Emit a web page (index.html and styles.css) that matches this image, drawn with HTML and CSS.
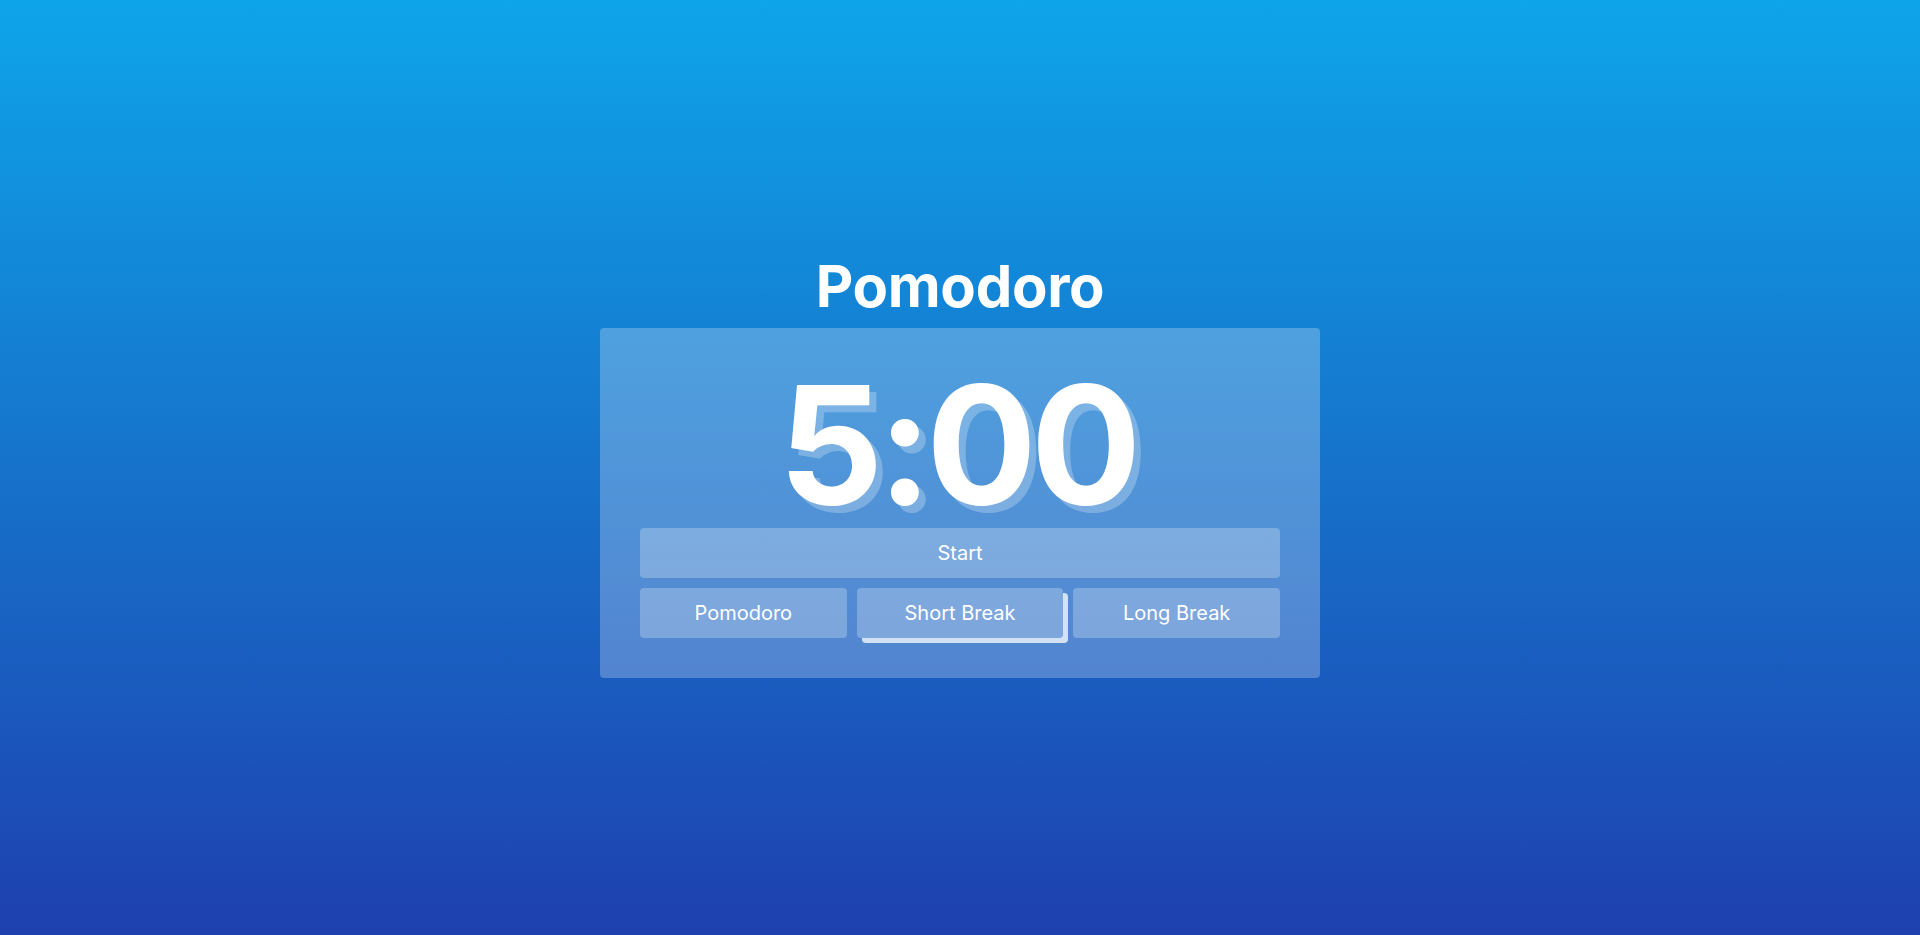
FILE: index.html
```html
<!DOCTYPE html>
<html lang="en">
<head>
<meta charset="utf-8">
<title>Pomodoro</title>
<link rel="stylesheet" href="styles.css">
</head>
<body>
<main class="app">
  <h1 class="title">Pomodoro</h1>
  <section class="card">
    <div class="timer">5:00</div>
    <button class="btn btn-start">Start</button>
    <div class="modes">
      <button class="btn">Pomodoro</button>
      <button class="btn btn-active">Short Break</button>
      <button class="btn">Long Break</button>
    </div>
  </section>
</main>
</body>
</html>
```
FILE: styles.css
```css
html, body {
  margin: 0;
  height: 100%;
}
body {
  background: linear-gradient(to bottom, #0ea5e9, #1e40af);
  font-family: Inter, "Noto Sans", sans-serif;
  color: #fff;
}
.app {
  height: 100%;
  box-sizing: border-box;
  padding-bottom: 8px;
  display: flex;
  flex-direction: column;
  align-items: center;
  justify-content: center;
}
.title {
  margin: 0 0 6px;
  font-size: 58px;
  line-height: 72px;
  font-weight: 700;
  letter-spacing: -0.3px;
}
.card {
  width: 720px;
  box-sizing: border-box;
  padding: 40px;
  background: rgba(255, 255, 255, 0.25);
  border-radius: 4px;
  display: flex;
  flex-direction: column;
  gap: 10px;
}
.timer {
  font-size: 164px;
  line-height: 147px;
  padding-top: 3px;
  font-weight: 700;
  text-align: center;
  letter-spacing: -6px;
  text-indent: -6px;
  text-shadow: 7px 7px 0 rgba(255, 255, 255, 0.25);
}
.btn {
  height: 50px;
  border: 0;
  border-radius: 4px;
  background: rgba(255, 255, 255, 0.25);
  color: #fff;
  font-family: inherit;
  font-size: 20px;
  cursor: pointer;
}
.modes {
  display: grid;
  grid-template-columns: repeat(3, 1fr);
  gap: 10px;
}
.btn-active {
  box-shadow: 5px 5px 0 rgba(255, 255, 255, 0.75);
}
```
